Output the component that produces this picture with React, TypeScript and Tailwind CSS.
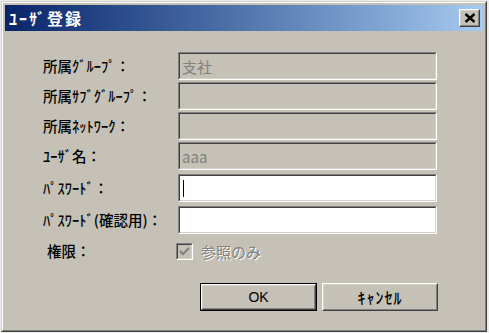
import React from "react";

const font = { fontFamily: '"Noto Sans CJK JP", "Noto Sans", sans-serif' };

function Field({ value, white, caret }: { value?: string; white?: boolean; caret?: boolean }) {
  return (
    <div className="w-[259px] h-[28px] border-t border-l border-[#808080] border-b-white border-r-white border-b border-r">
      <div
        className={`h-full border-t border-l border-t-[#404040] border-l-[#404040] border-b border-r border-b-[#d4d0c8] border-r-[#d4d0c8] flex items-center pl-[2px] ${
          white ? "bg-white" : "bg-[#c5c1b6]"
        }`}
      >
        {value && <span className="text-[15px] leading-none text-[#808080]">{value}</span>}
        {caret && <span className="w-px h-[17px] bg-black ml-[1px]" />}
      </div>
    </div>
  );
}

function Row({ label, children, mt }: { label: string; children: React.ReactNode; mt: string }) {
  return (
    <div className={`flex items-center ${mt}`}>
      <div className="w-[135px] text-[14.5px] leading-none text-black font-medium whitespace-nowrap">{label}</div>
      {children}
    </div>
  );
}

export default function App() {
  return (
    <div className="w-[489px] h-[333px] bg-[#ececec] pt-px pl-px" style={font}>
      <div className="w-[486px] h-[331px] border border-t-[#d4d0c8] border-l-[#d4d0c8] border-b-[#404040] border-r-[#404040]">
        <div className="w-full h-full border border-t-white border-l-white border-b-[#808080] border-r-[#808080] bg-[#c5c1b6] p-[2px] flex flex-col">
          {/* Title bar */}
          <div className="h-[26px] bg-gradient-to-r from-[#0a246a] to-[#a6caf0] flex items-center justify-between pl-[4px] pr-[3px]">
            <span className="text-white font-bold text-[16px] leading-none tracking-[2px]">ﾕｰｻﾞ登録</span>
            <div className="w-[21px] h-[18px] border border-t-white border-l-white border-b-[#404040] border-r-[#404040]">
              <div className="w-full h-full border border-t-[#d4d0c8] border-l-[#d4d0c8] border-b-[#808080] border-r-[#808080] bg-[#c5c1b6] flex items-center justify-center">
                <svg width="12" height="10" viewBox="0 0 12 10">
                  <path d="M1.5 1 L10.5 9 M10.5 1 L1.5 9" stroke="black" strokeWidth="2.4" />
                </svg>
              </div>
            </div>
          </div>

          {/* Body */}
          <div className="flex flex-col pl-[38px] pt-[21px]">
            <Row label="所属ｸﾞﾙｰﾌﾟ：" mt="mt-0">
              <Field value="支社" />
            </Row>
            <Row label="所属ｻﾌﾞｸﾞﾙｰﾌﾟ：" mt="mt-[2px]">
              <Field />
            </Row>
            <Row label="所属ﾈｯﾄﾜｰｸ：" mt="mt-[2px]">
              <Field />
            </Row>
            <Row label="ﾕｰｻﾞ名：" mt="mt-[2px]">
              <Field value="aaa" />
            </Row>
            <Row label="ﾊﾟｽﾜｰﾄﾞ：" mt="mt-[4px]">
              <Field white caret />
            </Row>
            <Row label="ﾊﾟｽﾜｰﾄﾞ(確認用)：" mt="mt-[4px]">
              <Field white />
            </Row>
            <div className="flex items-center mt-[9px] h-[17px]">
              <div className="w-[133px] pl-[4px] text-[14.5px] leading-none text-black font-medium">権限：</div>
              <div className="w-[17px] h-[17px] border border-t-[#808080] border-l-[#808080] border-b-white border-r-white">
                <div className="w-full h-full border border-t-[#404040] border-l-[#404040] border-b-[#d4d0c8] border-r-[#d4d0c8] bg-[#c5c1b6] flex items-center justify-center">
                  <svg width="11" height="10" viewBox="0 0 11 10">
                    <path d="M1 4 L4 7 L10 1" stroke="#808080" strokeWidth="2" fill="none" />
                  </svg>
                </div>
              </div>
              <span
                className="ml-[8px] text-[15px] leading-none text-[#808080]"
                style={{ textShadow: "1px 1px 0 #ffffff" }}
              >
                参照のみ
              </span>
            </div>
          </div>

          {/* Buttons */}
          <div className="flex pl-[195px] mt-[23px] gap-[5px]">
            <div className="w-[117px] h-[28px] border border-black">
              <div className="w-full h-full border border-t-white border-l-white border-b-[#404040] border-r-[#404040]">
                <div
                  className="w-full h-full border border-t-[#d4d0c8] border-l-[#d4d0c8] border-b-[#808080] border-r-[#808080] flex items-center justify-center text-[14px] leading-none text-black"
                  style={{ fontFamily: '"Liberation Sans", Arial, sans-serif' }}
                >
                  OK
                </div>
              </div>
            </div>
            <div className="w-[116px] h-[28px] border border-t-white border-l-white border-b-[#404040] border-r-[#404040]">
              <div className="w-full h-full border border-t-[#d4d0c8] border-l-[#d4d0c8] border-b-[#808080] border-r-[#808080] flex items-center justify-center text-[16px] leading-none text-black font-medium tracking-[1px]">
                ｷｬﾝｾﾙ
              </div>
            </div>
          </div>
        </div>
      </div>
    </div>
  );
}
